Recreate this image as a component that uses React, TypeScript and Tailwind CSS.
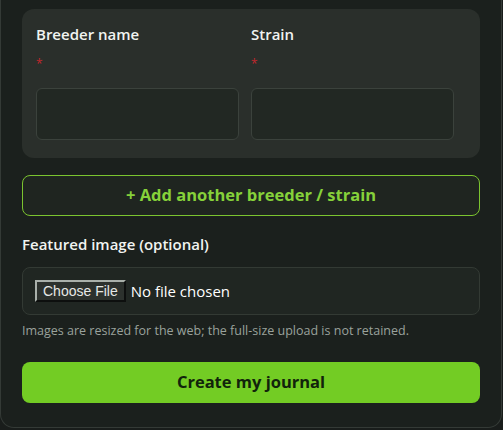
export default function App() {
  const font = { fontFamily: '"Open Sans", "Liberation Sans", sans-serif' };
  return (
    <div className="h-[430px] w-[503px] overflow-hidden bg-[#191d1b]" style={font}>
      <div className="w-[502px] rounded-b-[14px] border-x border-b border-[#343a36] bg-[#1b201d] px-[21px] pt-[9px] pb-[24px]">
        {/* breeder / strain group */}
        <div className="rounded-[12px] bg-[#2a2f2b] pl-[14px] pr-[26px] pt-[15px] pb-[18px]">
          <div className="grid grid-cols-2 gap-x-[12px]">
            {['Breeder name', 'Strain'].map((label) => (
              <div key={label}>
                <div className="h-5 text-[15px] leading-5 font-semibold text-[#f1f4f1]">{label}</div>
                <div className="mt-[12px] h-4 text-[12px] leading-4 text-[#c1272d]">*</div>
                <input
                  type="text"
                  className="mt-[16px] block h-[52px] w-full rounded-[6px] border border-[#3b423c] bg-[#222823] px-3 text-[14px] text-white outline-none"
                />
              </div>
            ))}
          </div>
        </div>

        <button className="mt-[17px] flex h-[41px] w-full items-center justify-center rounded-[8px] border border-[#7bc42f] bg-[#1f2520] text-[16.5px] font-bold text-[#86d13a]">
          + Add another breeder / strain
        </button>

        <div className="mt-[18px] h-5 text-[15px] leading-5 font-semibold text-[#f1f4f1]">Featured image (optional)</div>

        <div className="mt-[13px] flex h-[48px] items-center gap-[5px] rounded-[8px] border border-[#333a34] bg-[#202622] px-[12px]">
          <span
            className="flex h-[22px] items-center border-2 border-t-[#a9b0aa] border-l-[#a9b0aa] border-b-[#0d0f0e] border-r-[#0d0f0e] bg-[#2c312d] px-[6px] text-[14px] text-[#e6e8e6]"
            style={{ fontFamily: '"Liberation Sans", Arial, sans-serif' }}
          >
            Choose File
          </span>
          <span className="text-[15px] font-medium text-white">No file chosen</span>
        </div>

        <p className="mt-[8px] text-[12.5px] leading-4 text-[#9aa29c]">
          Images are resized for the web; the full-size upload is not retained.
        </p>

        <button className="mt-[23px] flex h-[41px] w-full items-center justify-center rounded-[8px] bg-[#73cc24] text-[16.5px] font-bold text-[#11230b]">
          Create my journal
        </button>
      </div>
    </div>
  );
}
